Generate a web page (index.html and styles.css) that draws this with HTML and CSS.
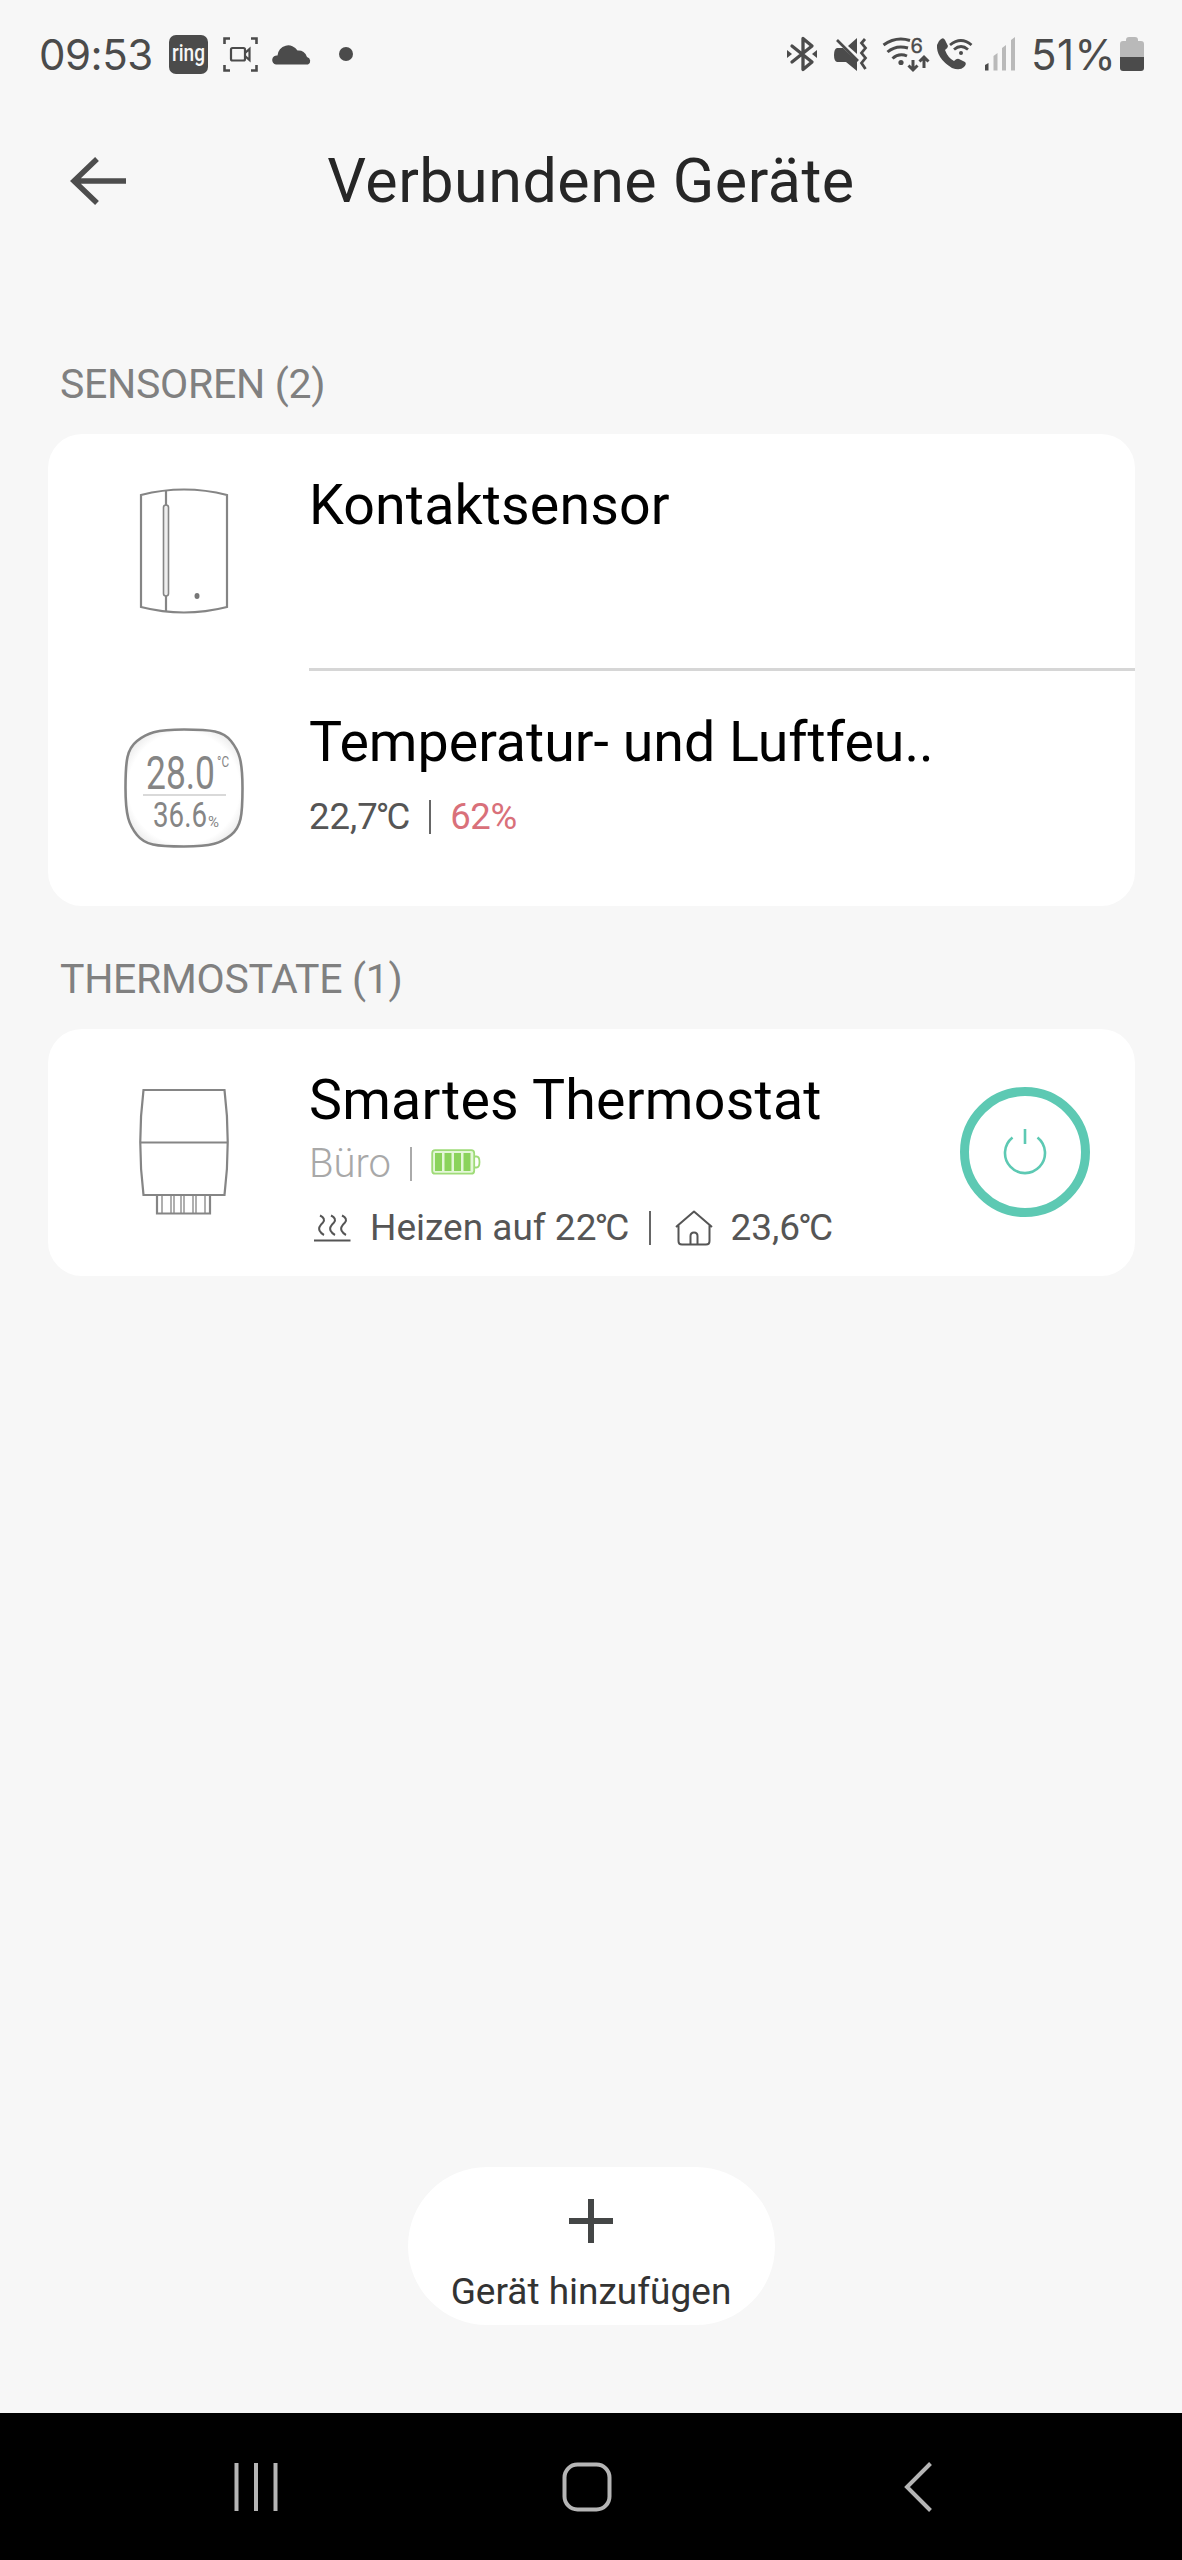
FILE: index.html
```html
<!DOCTYPE html>
<html lang="de">
<head>
<meta charset="utf-8">
<title>Verbundene Geräte</title>
<link rel="stylesheet" href="styles.css">
</head>
<body>
<div class="screen">
  <div class="status">
    <div class="status-left">
      <span class="clock">09:53</span>
      <svg class="ic-ring" width="39" height="39" viewBox="0 0 39 39"><rect width="39" height="39" rx="7" fill="#4b4b4b"/><text x="3" y="26" font-size="23" textLength="33" lengthAdjust="spacingAndGlyphs" fill="#f7f7f7">ring</text></svg>
      <svg class="ic-rec" width="35" height="35" viewBox="0 0 35 35" fill="none" stroke="#4b4b4b" stroke-width="2.6"><path d="M1.500 7V1.500H7M28 1.500h5.500V7M33.500 28v5.500H28M7 33.500H1.500V28"/><rect x="8" y="11" width="14" height="12.500" rx="1.500" stroke-width="2.200"/><path d="M22 16l4.500-4v11L22 19" stroke-width="2.200"/></svg>
      <svg class="ic-cloud" width="40" height="22" viewBox="0 0 40 22" fill="#4b4b4b"><path d="M4 21.500a4.500 4.500 0 0 1 1.500-9A10.800 10.800 0 0 1 25.500 7.500 8.500 8.500 0 0 1 35 14a4 4 0 0 1 1 7.500z"/></svg>
      <span class="dot"></span>
    </div>
    <div class="status-right">
      <svg class="ic-bt" width="30" height="36" viewBox="0 0 30 36" fill="none" stroke="#4b4b4b" stroke-width="3.300" stroke-linecap="round" stroke-linejoin="round"><path d="M5 10l20 16-9 7.500V2.500L25 10 5 26"/><path d="M0 14l5 4-5 4zM30 14l-5 4 5 4z" fill="#4b4b4b" stroke="none"/></svg>
      <svg class="ic-mute" width="34" height="36" viewBox="0 0 34 36" fill="#4b4b4b"><path d="M14 10l9-8v16zM3 12h6l14 13v10L12 26H3q-3-1-3-7t3-7z"/><path d="M3 4l21 21" fill="none" stroke="#4b4b4b" stroke-width="2.600"/><path d="M31 3l-3.500 4 4 5-4 5 4 5-4 5 4 6" fill="none" stroke="#4b4b4b" stroke-width="2.800"/></svg>
      <svg class="ic-wifi" width="48" height="36" viewBox="0 0 48 36" fill="none" stroke="#4b4b4b" stroke-width="3"><path d="M1.500 9Q14 0 28 4.500M5.500 16Q14 8.500 26 12M10.500 22.500Q17 16.500 25 20"/><circle cx="19" cy="26.500" r="2.600" fill="#4b4b4b" stroke="none"/><text x="28.500" y="17" font-size="20" fill="#4b4b4b" stroke="#4b4b4b" stroke-width=".4">6</text><path d="M31 24v9M26.500 29.500l4.500 4.500 4.500-4.500M42 32V21M37.500 25.500l4.500-4.500 4.500 4.500"/></svg>
      <svg class="ic-call" width="37" height="36" viewBox="0 0 37 36"><path d="M3 5q4-5 6-1l3 6q0 2-3 4 3 8 9 11 3-3 5-2l6 3q2 2-1 5-4 4-12 1Q0 22 1 9z" fill="#4b4b4b"/><g fill="none" stroke="#4b4b4b" stroke-width="2.800"><path d="M14 9Q25 0 35.500 9M18 13.500Q25 7.500 32 13.500"/></g><circle cx="25" cy="17" r="2" fill="#4b4b4b"/></svg>
      <svg class="ic-signal" width="30" height="34" viewBox="0 0 30 34"><path d="M0 28l3.500-2v7.500H0z" fill="#4b4b4b"/><path d="M8.500 19l4-3v17.500h-4zM17 11l4-3v25.500h-4zM26 3l4-3v33.500h-4z" fill="#b9b9b9"/></svg>
      <span class="percent">51%</span>
      <svg class="ic-batt" width="24" height="34" viewBox="0 0 24 34"><path d="M0 20V7q0-3 3-3h3V3q0-3 3-3h6q3 0 3 3v1h3q3 0 3 3v13z" fill="#b9b9b9"/><path d="M0 20h24v11q0 3-3 3H3q-3 0-3-3z" fill="#4b4b4b"/></svg>
    </div>
  </div>

  <header class="header">
    <svg width="58" height="50" viewBox="0 0 58 50" fill="none" stroke="#4d4d4d" stroke-width="5.500"><path d="M56 25H4M27 3L4 25l23 22"/></svg>
    <h1 class="title">Verbundene Geräte</h1>
  </header>

  <main class="content">
    <h2 class="label label-sensors">SENSOREN (2)</h2>
    <section class="card">
      <div class="row">
        <div class="device">
          <svg width="88" height="126" viewBox="0 0 88 126" fill="none" stroke="#858585" stroke-width="2.200"><path d="M1 7Q44-4 87 7V119Q44 130 1 119z"/><path d="M26 2v16M26 107v17"/><rect x="23.500" y="17" width="5" height="91" rx="2.500" fill="#eee" stroke-width="1.600"/><ellipse cx="57" cy="108" rx="2.500" ry="3" fill="#777" stroke="none"/></svg>
        </div>
        <div class="info info-divided"><h3 class="name name-contact">Kontaktsensor</h3></div>
      </div>
      <div class="row">
        <div class="device">
          <svg width="120" height="120" viewBox="0 0 120 120" fill="none">
            <defs><radialGradient id="glass" r=".68"><stop offset=".7" stop-color="#fff"/><stop offset="1" stop-color="#d6d6d6"/></radialGradient></defs>
            <path d="M60 1.500C88 1.500 99 3 107 13S118.500 32 118.500 60 117 99 107 107 88 118.500 60 118.500 21 117 13 107 1.500 88 1.500 60 3 21 13 13 32 1.500 60 1.500z" fill="url(#glass)" stroke="#858585" stroke-width="2.600"/>
            <g class="lcd" fill="#858585"><text x="22" y="61" font-size="46" textLength="69" lengthAdjust="spacingAndGlyphs">28.0</text><text x="93" y="39" font-size="14" textLength="12" lengthAdjust="spacingAndGlyphs">°C</text><text x="29" y="99" font-size="35" textLength="54" lengthAdjust="spacingAndGlyphs">36.6</text><text x="84" y="99" font-size="14" textLength="11" lengthAdjust="spacingAndGlyphs">%</text></g>
            <path d="M19 67h83" stroke="#ccc" stroke-width="1.500"/>
          </svg>
        </div>
        <div class="info">
          <h3 class="name name-climate">Temperatur- und Luftfeu..</h3>
          <p class="line line-reading"><span class="value">22,7<span class="deg">°</span>C</span><i class="bar"></i><span class="humidity">62%</span></p>
        </div>
      </div>
    </section>

    <h2 class="label label-thermo">THERMOSTATE (1)</h2>
    <section class="card">
      <div class="row row-thermo">
        <div class="device">
          <svg width="90" height="126" viewBox="0 0 90 126" fill="none" stroke="#858585" stroke-width="2.200"><path d="M4.500 1h81q6.500 52 0 105h-81Q-2 53 4.500 1zM1 53.500h88"/><path d="M18 106v18.500h53V106" /><path d="M23 107v17M32 107v17M35 107v17M42 107v17M45 107v17M54 107v17M57 107v17M66 107v17" stroke-width="1.300"/></svg>
        </div>
        <div class="info">
          <h3 class="name name-thermo">Smartes Thermostat</h3>
          <p class="line line-room"><span class="room">Büro</span><i class="bar bar-light"></i><svg class="ic-level" width="50" height="26" viewBox="0 0 50 26"><rect x="1.200" y="1.200" width="42" height="23.500" rx="3" fill="#e4f7d8" stroke="#9fdb78" stroke-width="1.800"/><path d="M4 4h7v18H4zM13.500 4h7v18h-7zM23 4h7v18h-7zM32.500 4h7v18h-7z" fill="#8bd35c"/><path d="M43.500 7.500h2q3 0 3 5.500t-3 5.500h-2" fill="none" stroke="#9fdb78" stroke-width="1.800"/></svg></p>
          <p class="line line-heat"><svg class="ic-heat" width="37" height="28" viewBox="0 0 37 28" fill="none" stroke="#555" stroke-width="2"><path d="M0 26.500h36.500"/><path d="M6 1.500q6 3 3 7-5 4.500-3.500 8 1.500 3 4.500 4.500M17 1.500q6 3 3 7-5 4.500-3.500 8 1.500 3 4.500 4.500M28 1.500q6 3 3 7-5 4.500-3.500 8 1.500 3 4.500 4.500"/></svg><span class="target">Heizen auf 22<span class="deg">°</span>C</span><i class="bar"></i><svg class="ic-home" width="38" height="36" viewBox="0 0 38 36" fill="none" stroke="#555" stroke-width="2" stroke-linejoin="round"><path d="M1 17L19 1.500 37 17M3.500 15v16q0 3.500 3.500 3.500h24q3.500 0 3.500-3.500V15"/><path d="M15.500 34V26q0-3.500 3.500-3.500t3.500 3.500v8"/></svg><span class="value">23,6<span class="deg">°</span>C</span></p>
        </div>
        <button class="power" aria-label="Ein/Aus"><svg width="44" height="48" viewBox="0 0 44 48" fill="none" stroke="#5dc9b3" stroke-width="2.600"><path d="M22 1v15M9.500 9.500a20 20 0 1 0 25 0"/></svg></button>
      </div>
    </section>
  </main>

  <div class="footer">
    <button class="add"><svg width="44" height="44" viewBox="0 0 44 44" stroke="#444646" stroke-width="6"><path d="M22 0v44M0 22h44"/></svg><span class="add-text">Gerät hinzufügen</span></button>
  </div>

  <nav class="nav">
    <svg width="44" height="50" viewBox="0 0 44 50" stroke="#b5b5b5" stroke-width="4"><path d="M2.500 1v48M22 1v48M41.500 1v48"/></svg>
    <svg width="50" height="50" viewBox="0 0 50 50" fill="none" stroke="#b5b5b5" stroke-width="4"><rect x="2.500" y="2.500" width="45" height="45" rx="13"/></svg>
    <svg width="28" height="50" viewBox="0 0 28 50" fill="none" stroke="#b5b5b5" stroke-width="4"><path d="M26.500 1.500L3 25l23.500 23.500"/></svg>
  </nav>
</div>
</body>
</html>
```
FILE: styles.css
```css
* { box-sizing: border-box; }
body { margin: 0; background: #f7f7f7; font-family: Roboto, "Noto Sans", sans-serif; }
h1, h2, h3, p { margin: 0; font-weight: 400; white-space: nowrap; }
button { border: 0; padding: 0; font: inherit; }
svg { display: block; flex: none; overflow: visible; }

.screen { width: 1182px; height: 2560px; display: flex; flex-direction: column; background: #f7f7f7; }

.status { height: 108px; padding: 0 38px 0 39px; display: flex; justify-content: space-between; align-items: center; color: #4b4b4b; font-family: Inter, sans-serif; font-size: 42px; }
.status-left, .status-right { display: flex; align-items: center; }
.clock { width: 130px; white-space: nowrap; font-weight: 400; letter-spacing: -0.5px; }
.ic-ring { font-family: Roboto, sans-serif; font-weight: 500; }
.ic-rec { margin-left: 15px; }
.ic-cloud { margin-left: 14px; }
.dot { width: 14px; height: 14px; margin-left: 27px; border-radius: 50%; background: #4b4b4b; }
.ic-mute { margin-left: 17px; }
.ic-wifi { margin-left: 14px; }
.ic-call { margin-left: 6px; }
.ic-signal { margin-left: 12px; }
.percent { width: 89px; margin-left: 16px; letter-spacing: .5px; }

.header { height: 145px; padding: 0 70px; display: grid; grid-template-columns: 58px 1fr 58px; align-items: center; }
.title { text-align: center; font-size: 61px; line-height: 72px; color: #262626; letter-spacing: .5px; }

.content { flex: 1; padding: 101px 47px 0 48px; }
.label { padding-left: 12px; margin-bottom: 20px; font-size: 41px; line-height: 60px; color: #808080; letter-spacing: -.3px; }
.label-thermo { margin-top: 43px; }
.card { background: #fff; border-radius: 34px; }
.row { display: flex; height: 237px; }
.row:last-child { height: 235px; }
.row.row-thermo { height: 247px; }
.device { width: 261px; padding-left: 11px; height: 234px; flex: none; display: flex; align-items: center; justify-content: center; }
.row-thermo .device { height: 245px; }
.info { flex: 1; padding-top: 37px; }
.info-divided { border-bottom: 3px solid #d6d6d6; }
.name { font-size: 55.5px; line-height: 70px; color: #000; }
.name-contact { letter-spacing: .15px; }
.name-thermo { letter-spacing: .25px; }
.line { display: flex; align-items: center; height: 50px; line-height: 50px; font-size: 37px; color: #555; }
.line-reading { margin-top: 14px; font-size: 36.5px; }
.line-room { margin-top: 3px; }
.line-heat { margin-top: 14px; }
.deg { margin: 0 -3px 0 -2px; }
.bar { width: 2px; height: 34px; margin: 0 20px; background: #666; }
.line-reading .bar { margin: 0 19px; }
.bar-light { margin: 0 19px; background: #aaa; }
.humidity { color: #d9707a; letter-spacing: -.3px; }
.room { font-size: 40px; font-weight: 300; color: #a8a8a8; }
.ic-level { margin-bottom: 5px; }
.ic-heat { margin: 0 19px 0 5px; }
.ic-home { margin: 0 17px 0 4px; }
.power { width: 130px; height: 130px; margin: 58px 45px 0 0; border: 9px solid #5dc9b3; border-radius: 50%; background: #fff; display: flex; align-items: center; justify-content: center; flex: none; }

.footer { height: 246px; display: flex; justify-content: center; align-items: flex-start; }
.add { width: 367px; height: 158px; border-radius: 79px; background: #fff; display: flex; flex-direction: column; align-items: center; padding-top: 32px; }
.add-text { margin-top: 24px; font-size: 37px; line-height: 50px; color: #333; }

.nav { height: 147px; padding: 0 250px 0 234px; background: #000; display: grid; grid-template-columns: 328px 1fr auto; align-items: center; }
```
